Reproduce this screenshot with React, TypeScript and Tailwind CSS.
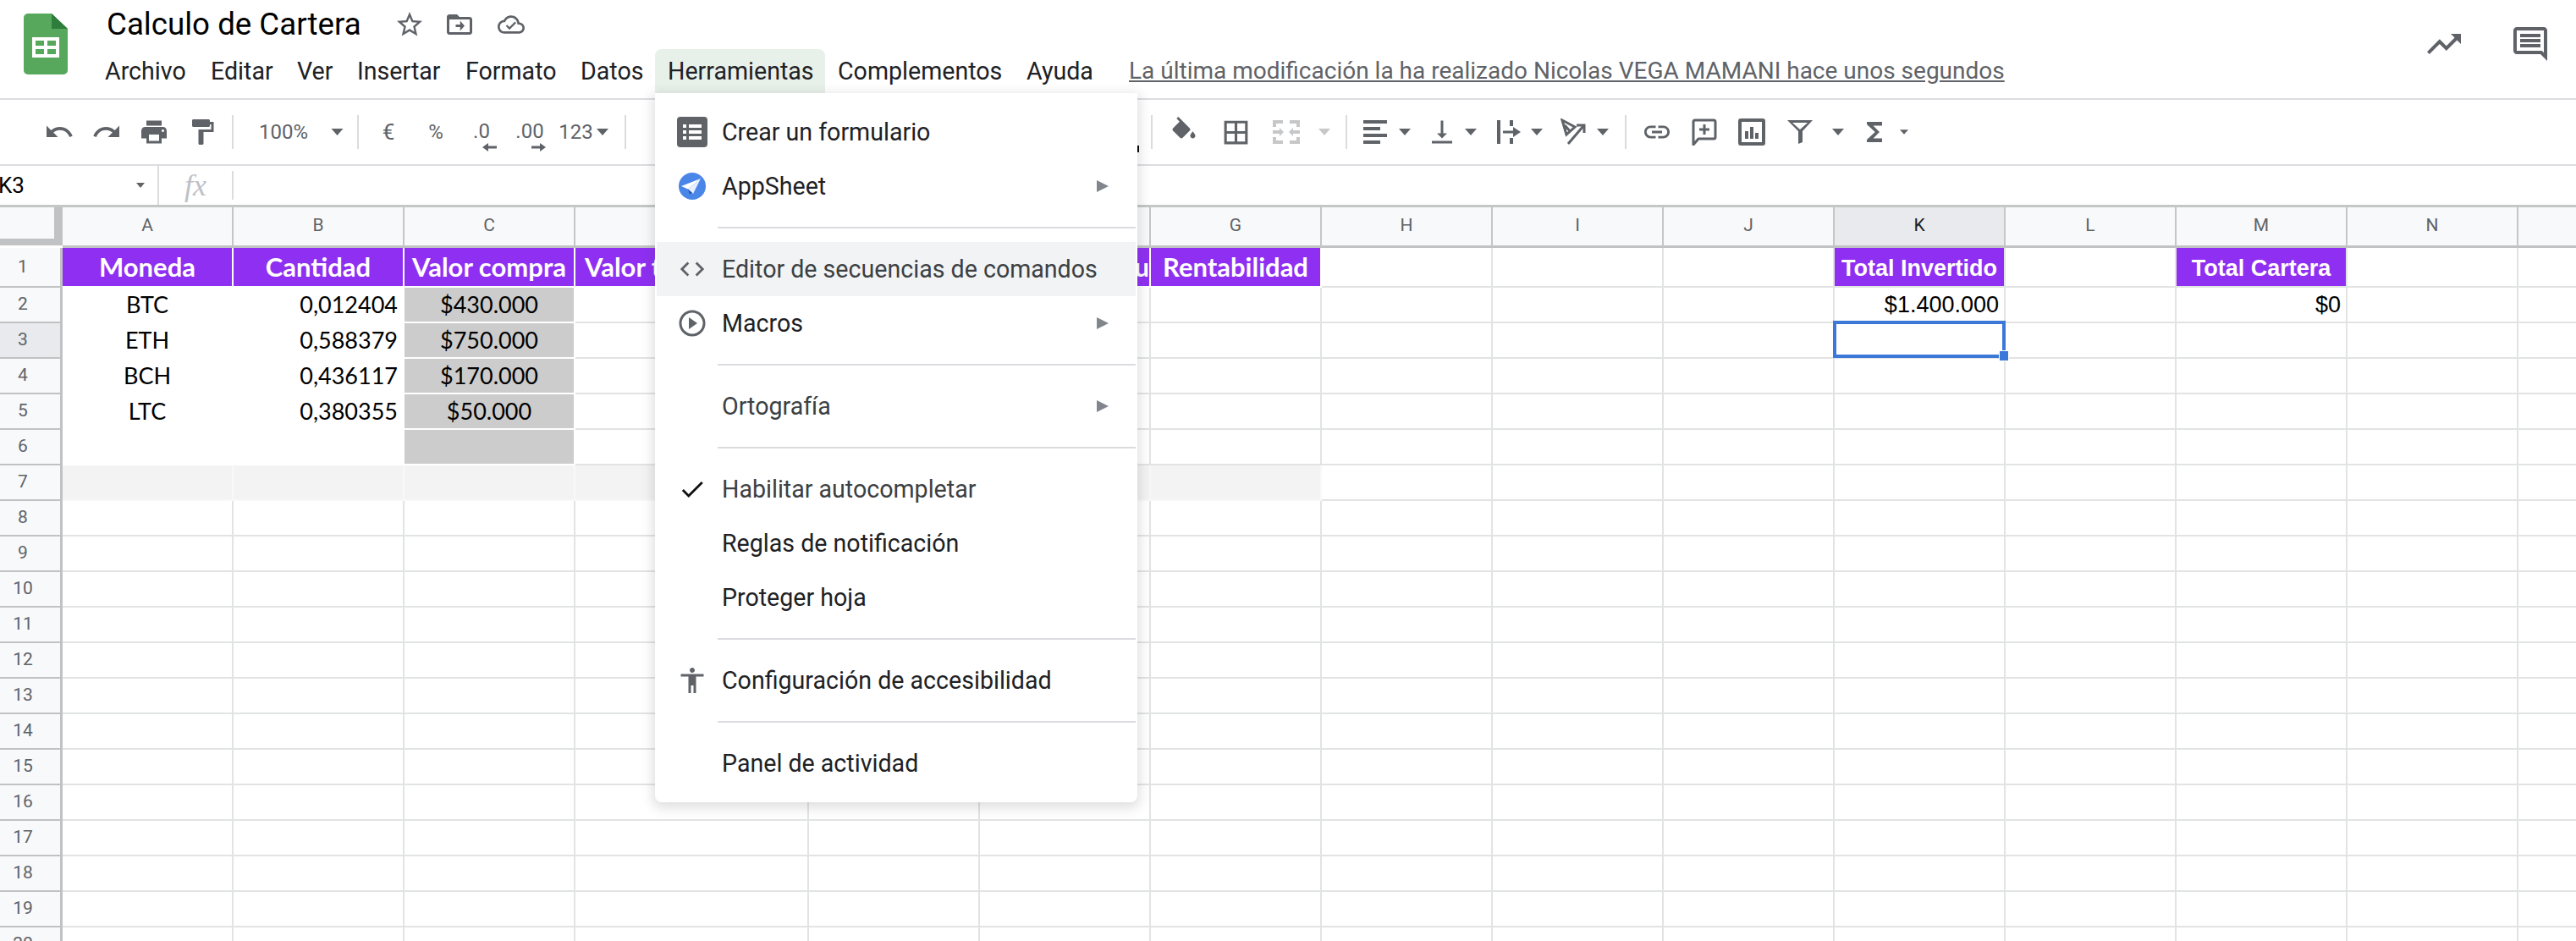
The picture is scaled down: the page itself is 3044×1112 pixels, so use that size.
import type { ReactNode } from 'react';

const gray = '#5f6368';

function Ico({ d, size = 36, color = gray, className = '' }: { d: string; size?: number; color?: string; className?: string }) {
  return (
    <svg width={size} height={size} viewBox="0 0 24 24" fill={color} className={`shrink-0 ${className}`}>
      <path d={d} />
    </svg>
  );
}

// icon slot, 30px wide, the svg may be a little wider than the slot
function Slot({ className = '', children }: { className?: string; children: ReactNode }) {
  return <div className={`w-[30px] h-[40px] shrink-0 flex items-center justify-center ${className}`}>{children}</div>;
}

function Caret({ className = '', w = 14, color = gray }: { className?: string; w?: number; color?: string }) {
  return (
    <div className={`w-[14px] shrink-0 flex items-center justify-center ${className}`}>
      <svg width={w} height={8} viewBox="0 0 14 8" fill={color} className="shrink-0">
        <path d="M0 0h14L7 8z" />
      </svg>
    </div>
  );
}

function Sep({ className = '' }: { className?: string }) {
  return <div className={`w-[2px] h-[40px] bg-[#dadce0] shrink-0 ${className}`} />;
}

const I = {
  undo: 'M12.5 8c-2.65 0-5.05.99-6.9 2.6L2 7v9h9l-3.62-3.62c1.39-1.16 3.16-1.88 5.12-1.88 3.54 0 6.55 2.31 7.6 5.5l2.37-.78C21.08 11.03 17.15 8 12.5 8z',
  redo: 'M18.4 10.6C16.55 8.99 14.15 8 11.5 8c-4.65 0-8.58 3.03-9.96 7.22L3.9 16c1.05-3.19 4.05-5.5 7.6-5.5 1.95 0 3.73.72 5.12 1.88L13 16h9V7l-3.6 3.6z',
  print: 'M19 8H5c-1.66 0-3 1.34-3 3v6h4v4h12v-4h4v-6c0-1.66-1.34-3-3-3zm-3 11H8v-5h8v5zm3-7c-.55 0-1-.45-1-1s.45-1 1-1 1 .45 1 1-.45 1-1 1zm-1-9H6v4h12V3z',
  paint: 'M18 4V3c0-.55-.45-1-1-1H5c-.55 0-1 .45-1 1v4c0 .55.45 1 1 1h12c.55 0 1-.45 1-1V6h1v4H9v11c0 .55.45 1 1 1h2c.55 0 1-.45 1-1v-9h8V4h-3z',
  fill: 'M16.56 8.94L7.62 0 6.21 1.41l2.38 2.38-5.15 5.15c-.59.59-.59 1.54 0 2.12l5.5 5.5c.29.29.68.44 1.06.44s.77-.15 1.06-.44l5.5-5.5c.59-.58.59-1.53 0-2.12zM19 11.5s-2 2.17-2 3.5c0 1.1.9 2 2 2s2-.9 2-2c0-1.33-2-3.5-2-3.5z',
  borders: 'M3 3v18h18V3H3zm8 16H5v-6h6v6zm0-8H5V5h6v6zm8 8h-6v-6h6v6zm0-8h-6V5h6v6z',
  valign: 'M16 13h-3V3h-2v10H8l4 4 4-4zM4 19v2h16v-2H4z',
  link: 'M3.9 12c0-1.71 1.39-3.1 3.1-3.1h4V7H7c-2.76 0-5 2.24-5 5s2.24 5 5 5h4v-1.9H7c-1.71 0-3.1-1.39-3.1-3.1zM8 13h8v-2H8v2zm9-6h-4v1.9h4c1.71 0 3.1 1.39 3.1 3.1s-1.39 3.1-3.1 3.1h-4V17h4c2.76 0 5-2.24 5-5s-2.24-5-5-5z',
  sigma: 'M18 4H6v2l6.5 6L6 18v2h12v-3h-7l5-5-5-5h7z',
  star: 'M22 9.24l-7.19-.62L12 2 9.19 8.63 2 9.24l5.46 4.73L5.82 21 12 17.27 18.18 21l-1.63-7.03L22 9.24zM12 15.4l-3.76 2.27 1-4.28-3.32-2.88 4.38-.38L12 6.1l1.71 4.04 4.38.38-3.32 2.88 1 4.28L12 15.4z',
  folder: 'M20 6h-8l-2-2H4c-1.1 0-2 .9-2 2v12c0 1.1.9 2 2 2h16c1.1 0 2-.9 2-2V8c0-1.1-.9-2-2-2zm0 12H4V8h16v10zM12.5 9l3.5 4-3.5 4v-3H9v-2h3.5z',
  cloud: 'M19.35 10.04C18.67 6.59 15.64 4 12 4 9.11 4 6.6 5.64 5.35 8.04 2.34 8.36 0 10.91 0 14c0 3.31 2.69 6 6 6h13c2.76 0 5-2.24 5-5 0-2.64-2.05-4.78-4.65-4.96zM19 18H6c-2.21 0-4-1.79-4-4 0-2.05 1.53-3.76 3.56-3.97l1.07-.11.5-.95C8.08 7.14 9.94 6 12 6c2.62 0 4.88 1.86 5.39 4.43l.3 1.5 1.53.11c1.56.1 2.78 1.41 2.78 2.96 0 1.65-1.35 3-3 3zM10.5 14.2l-2-2-1.2 1.2 3.2 3.2 6-6-1.2-1.2z',
  trend: 'M16 6l2.29 2.29-4.88 4.88-4-4L2 16.59 3.41 18l6-6 4 4 6.3-6.29L22 12V6z',
  comments: 'M20 2H4c-1.1 0-2 .9-2 2v12c0 1.1.9 2 2 2h14l4 4V4c0-1.1-.9-2-2-2zm0 15.17L18.83 16H4V4h16v13.17zM6 12h12v2H6zm0-3h12v2H6zm0-3h12v2H6z',
  code: 'M9.4 16.6L4.8 12l4.6-4.6L8 6l-6 6 6 6 1.4-1.4zm5.2 0l4.6-4.6-4.6-4.6L16 6l6 6-6 6-1.4-1.4z',
  check: 'M9 16.17L4.83 12l-1.42 1.41L9 19 21 7l-1.41-1.41z',
  access: 'M12 2c1.1 0 2 .9 2 2s-.9 2-2 2-2-.9-2-2 .9-2 2-2zm9 7h-6v13h-2v-6h-2v6H9V9H3V7h18v2z',
};

function SheetsLogo() {
  return (
    <svg width="52" height="72" viewBox="0 0 52 72" className="shrink-0">
      <path d="M5 0h28l19 18v49a5 5 0 0 1-5 5H5a5 5 0 0 1-5-5V5a5 5 0 0 1 5-5z" fill="#57a85c" />
      <path d="M33 0l19 18H33z" fill="#2e7d3c" />
      <path d="M10 28h32v24H10z" fill="#fff" />
      <path d="M14 32h10v6H14zM28 32h10v6H28zM14 42h10v6H14zM28 42h10v6H28z" fill="#57a85c" />
    </svg>
  );
}

function MergeIcon() {
  return (
    <svg width="32" height="28" viewBox="0 0 32 28" className="shrink-0" fill="#c6c7c9">
      <path d="M0 0h12v4H4v4H0zM20 0h12v8h-4V4h-8zM0 20h4v4h8v4H0zM28 20h4v8H20v-4h8z" />
      <path d="M0 12h8V9l5 5-5 5v-3H0zM32 12h-8V9l-5 5 5 5v-3h8z" />
    </svg>
  );
}

function HAlignIcon() {
  return (
    <svg width="28" height="28" viewBox="0 0 28 28" className="shrink-0" fill={gray}>
      <path d="M0 0h28v4H0zM0 8h20v4H0zM0 16h28v4H0zM0 24h20v4H0z" />
    </svg>
  );
}

function WrapIcon() {
  return (
    <svg width="28" height="28" viewBox="0 0 28 28" className="shrink-0" fill={gray}>
      <path d="M0 0h4v28H0zM15 0h4v7h-4zM15 21h4v7h-4zM7 12.5h12V8l9 6-9 6v-4.500H7z" />
    </svg>
  );
}

function RotateIcon() {
  return (
    <svg width="32" height="32" viewBox="0 0 32 32" className="shrink-0" fill="none" stroke={gray} strokeWidth="3">
      <path d="M3 2l15 8-10 9zM6 8l7 8" />
      <path d="M10 30L28 9" />
      <path d="M20 8h9v9" />
    </svg>
  );
}

function CommentAddIcon() {
  return (
    <svg width="30" height="32" viewBox="0 0 30 32" className="shrink-0" fill="none" stroke={gray} strokeWidth="3">
      <path d="M2 31V4a2 2 0 0 1 2-2h22a2 2 0 0 1 2 2v18a2 2 0 0 1-2 2H8z" strokeLinejoin="round" />
      <path d="M15 7v12M9 13h12" />
    </svg>
  );
}

function ChartIcon() {
  return (
    <svg width="32" height="32" viewBox="0 0 32 32" className="shrink-0" fill={gray}>
      <path d="M3 0h26a3 3 0 0 1 3 3v26a3 3 0 0 1-3 3H3a3 3 0 0 1-3-3V3a3 3 0 0 1 3-3zm1 4v24h24V4z" fillRule="evenodd" />
      <path d="M8 15h4v9H8zM14 10h4v14h-4zM20 17h4v7h-4z" />
    </svg>
  );
}

function FilterIcon() {
  return (
    <svg width="30" height="28" viewBox="0 0 30 28" className="shrink-0" fill={gray}>
      <path d="M0 0h30L18 13v13l-5 2V13zM6 3l9 8 9-8z" fillRule="evenodd" />
    </svg>
  );
}

function DecIcon({ label, right }: { label: string; right?: boolean }) {
  return (
    <div className="flex flex-col h-[44px] justify-start text-[24px] leading-[30px] text-[#5f6368] shrink-0 items-stretch w-full">
      <span className="text-center">{label}</span>
      <svg width="17" height="10" viewBox="0 0 17 10" fill={gray} className="self-end -mt-[1px]">
        {right ? <path d="M0 3.500h10V0l7 5-7 5V6.500H0z" /> : <path d="M17 3.500H7V0L0 5l7 5V6.500h10z" />}
      </svg>
    </div>
  );
}

function Toolbar() {
  return (
    <div className="h-[78px] border-b-2 border-[#dadce0] flex items-center pl-[55px] text-[#5f6368]">
      <Slot><Ico d={I.undo} /></Slot>
      <Slot className="ml-[26px]"><Ico d={I.redo} /></Slot>
      <Slot className="ml-[26px]"><Ico d={I.print} /></Slot>
      <Slot className="ml-[27px]"><Ico d={I.paint} /></Slot>
      <Sep className="ml-[20px]" />
      <span className="ml-[29px] w-[60px] text-center text-[24px] shrink-0">100%</span>
      <Caret className="ml-[26px]" w={15} />
      <Sep className="ml-[17px]" />
      <Slot className="ml-[20px] text-[26px]">€</Slot>
      <Slot className="ml-[26px] text-[24px]">%</Slot>
      <div className="ml-[21px] w-[36px] mt-[12px] shrink-0"><DecIcon label=".0" /></div>
      <div className="ml-[20px] w-[38px] mt-[12px] shrink-0"><DecIcon label=".00" right /></div>
      <span className="ml-[15px] w-[41px] text-center text-[24px] shrink-0">123</span>
      <Caret className="ml-[4px]" />
      <Sep className="ml-[19px]" />
      <div className="ml-[603px] w-[3px] h-[8px] bg-black self-start mt-[54px] shrink-0" />
      <Sep className="ml-[14px]" />
      <Slot className="ml-[22px]"><Ico d={I.fill} /></Slot>
      <Slot className="ml-[31px]"><Ico d={I.borders} size={37} /></Slot>
      <Slot className="ml-[30px]"><MergeIcon /></Slot>
      <Caret className="ml-[23px]" color="#c6c7c9" />
      <Sep className="ml-[18px]" />
      <Slot className="ml-[18px]"><HAlignIcon /></Slot>
      <Caret className="ml-[13px]" />
      <Slot className="ml-[22px]"><Ico d={I.valign} /></Slot>
      <Caret className="ml-[12px]" />
      <Slot className="ml-[23px]"><WrapIcon /></Slot>
      <Caret className="ml-[11px]" />
      <Slot className="ml-[21px]"><RotateIcon /></Slot>
      <Caret className="ml-[13px]" />
      <Sep className="ml-[19px]" />
      <Slot className="ml-[21px]"><Ico d={I.link} /></Slot>
      <Slot className="ml-[26px]"><CommentAddIcon /></Slot>
      <Slot className="ml-[26px]"><ChartIcon /></Slot>
      <Slot className="ml-[27px]"><FilterIcon /></Slot>
      <Caret className="ml-[23px]" />
      <Slot className="ml-[21px]"><Ico d={I.sigma} /></Slot>
      <Caret className="ml-[13px]" w={10} />
    </div>
  );
}

function TitleBar() {
  const menus = [
    { label: 'Archivo', w: 'w-[125px]' },
    { label: 'Editar', w: 'w-[102px]' },
    { label: 'Ver', w: 'w-[71px]' },
    { label: 'Insertar', w: 'w-[128px]' },
    { label: 'Formato', w: 'w-[136px]' },
    { label: 'Datos', w: 'w-[103px]' },
    { label: 'Herramientas', w: 'w-[201px] bg-[#e8f0ea] rounded-t-[8px]' },
    { label: 'Complementos', w: 'w-[223px]' },
    { label: 'Ayuda', w: 'w-[136px]' },
  ];
  return (
    <header className="h-[118px] border-b-2 border-[#dadce0] flex">
      <div className="pl-[28px] pt-[16px]"><SheetsLogo /></div>
      <div className="ml-[29px]">
        <div className="h-[58px] pl-[17px] flex items-center">
          <span className="w-[301px] text-[36.7px] text-black whitespace-nowrap [font-family:Roboto,sans-serif]">Calculo de Cartera</span>
          <Ico d={I.star} className="ml-[39px]" />
          <Ico d={I.folder} className="ml-[23px]" />
          <Ico d={I.cloud} size={32} className="ml-[27px]" />
        </div>
        <div className="h-[52px] flex items-center text-[28.6px] text-[#202124]">
          {menus.map((m) => (
            <div key={m.label} className={`h-[52px] pl-[15px] flex items-center shrink-0 ${m.w}`}>{m.label}</div>
          ))}
          <span className="text-[28px] text-[#5f6368] underline whitespace-nowrap">
            La última modificación la ha realizado Nicolas VEGA MAMANI hace unos segundos
          </span>
        </div>
      </div>
      <div className="ml-auto flex gap-[54px] pr-[30px] pt-[28px]">
        <Ico d={I.trend} size={48} />
        <Ico d={I.comments} size={48} />
      </div>
    </header>
  );
}

function FormulaBar() {
  return (
    <div className="h-[49px] border-b-[3px] border-[#c4c7c5] flex items-stretch">
      <div className="w-[188px] border-r-2 border-[#dadce0] flex items-center shrink-0">
        <span className="-ml-[2px] text-[26px] text-black">K3</span>
        <svg width="10" height="6" viewBox="0 0 10 6" fill={gray} className="ml-auto mr-[15px]">
          <path d="M0 0h10L5 6z" />
        </svg>
      </div>
      <div className="w-[88px] flex items-center justify-center border-r-2 border-[#dadce0] my-[6px] shrink-0">
        <span className="text-[36px] italic text-[#bdc1c6] [font-family:'Liberation_Serif',serif]">fx</span>
      </div>
    </div>
  );
}

const letters = ['A', 'B', 'C', 'D', 'E', 'F', 'G', 'H', 'I', 'J', 'K', 'L', 'M', 'N', 'O'];
const rowNums = Array.from({ length: 20 }, (_, i) => i + 1);

const muli = '[font-family:Lato,sans-serif]';
const arial = "[font-family:'Liberation_Sans',Arial,sans-serif]";
const headCell = `bg-[#8f2ff2] text-white font-bold text-[31px] ${muli} border-white`;
const grayCell = `bg-[#cccccc] text-black text-[27px] justify-center ${muli} border-white`;
const dataCell = `text-black text-[27px] ${muli}`;
const totalCell = `bg-[#8f2ff2] border-[#8f2ff2] text-white font-bold text-[27px] justify-center pt-[4px] ${arial}`;

type CellDef = { text?: string; className: string };

const cells: Record<string, CellDef> = {
  A1: { text: 'Moneda', className: `${headCell} justify-center` },
  B1: { text: 'Cantidad', className: `${headCell} justify-center` },
  C1: { text: 'Valor compra', className: `${headCell} justify-center` },
  D1: { text: 'Valor total', className: `${headCell} pl-[11px]` },
  E1: { className: headCell },
  F1: { text: 'u', className: `${headCell} justify-end` },
  G1: { text: 'Rentabilidad', className: `${headCell} justify-center` },
  K1: { text: 'Total Invertido', className: totalCell },
  M1: { text: 'Total Cartera', className: totalCell },
  A2: { text: 'BTC', className: `${dataCell} justify-center border-[#ffffff]` },
  A3: { text: 'ETH', className: `${dataCell} justify-center border-[#ffffff]` },
  A4: { text: 'BCH', className: `${dataCell} justify-center border-[#ffffff]` },
  A5: { text: 'LTC', className: `${dataCell} justify-center border-[#ffffff]` },
  A6: { className: 'border-[#ffffff]' },
  B2: { text: '0,012404', className: `${dataCell} justify-end pr-[6px] border-[#ffffff]` },
  B3: { text: '0,588379', className: `${dataCell} justify-end pr-[6px] border-[#ffffff]` },
  B4: { text: '0,436117', className: `${dataCell} justify-end pr-[6px] border-[#ffffff]` },
  B5: { text: '0,380355', className: `${dataCell} justify-end pr-[6px] border-[#ffffff]` },
  B6: { className: 'border-[#ffffff]' },
  C2: { text: '$430.000', className: grayCell },
  C3: { text: '$750.000', className: grayCell },
  C4: { text: '$170.000', className: grayCell },
  C5: { text: '$50.000', className: grayCell },
  C6: { className: grayCell },
  K2: { text: '$1.400.000', className: `text-black text-[27px] justify-end pr-[6px] ${arial}` },
  M2: { text: '$0', className: `text-black text-[27px] justify-end pr-[6px] ${arial}` },
};

function Grid() {
  return (
    <div className="relative grid grid-cols-[74px_repeat(3,202px)_276px_repeat(11,202px)] grid-rows-[48px_47px_repeat(19,42px)]">
      <div className="bg-[#f8f9fa] border-r-[10px] border-[#c0c2c4] h-[45px]">
        <div className="h-[37px]" />
        <div className="h-[8px] bg-[#c0c2c4]" />
      </div>
      {letters.map((l) => (
        <div
          key={l}
          className={`${l === 'K' ? 'bg-[#e8eaed] text-[#202124]' : 'bg-[#f8f9fa] text-[#5f6368]'} border-r-2 border-[#c4c7c5] border-b-[3px] border-b-[#c0c2c4] flex items-center justify-center text-[21px] pb-[2px]`}
        >
          {/* column O is off screen, its letter would never show */}
          {l === 'O' ? null : l}
        </div>
      ))}
      {rowNums.map((r) => (
        <div key={r} className="contents">
          <div
            className={`${r === 3 ? 'bg-[#e8eaed]' : 'bg-[#f8f9fa]'} border-r-[3px] border-b-2 border-[#c0c2c4] flex items-center justify-center pr-[17px] text-[21px] text-[#5f6368]`}
          >
            {r}
          </div>
          {letters.map((l, i) => {
            const cell = cells[`${l}${r}`];
            const isRow7 = r === 7 && i < 7;
            return (
              <div
                key={l}
                className={`relative flex items-center border-r-2 border-b-2 whitespace-nowrap min-w-0 ${
                  isRow7 ? 'bg-[#f3f3f3] border-[#f8f8f8]' : 'border-[#e2e3e3]'
                } ${cell ? cell.className : ''}`}
              >
                {cell?.text}
                {l === 'K' && r === 3 && (
                  <div className="absolute -left-[2px] -top-[3px] w-[204px] h-[44px] border-[4px] border-[#3b78d8] z-10">
                    <div className="absolute -right-[8px] -bottom-[8px] w-[12px] h-[13px] bg-[#3b78d8] border border-white" />
                  </div>
                )}
              </div>
            );
          })}
        </div>
      ))}
    </div>
  );
}

type MenuEntry =
  | { sep: true }
  | { sep?: false; label: string; icon?: ReactNode; more?: boolean; hover?: boolean; soft?: boolean };

function FormIcon() {
  return (
    <svg width="36" height="36" viewBox="0 0 36 36">
      <rect width="36" height="36" rx="4" fill={gray} />
      <path d="M7 9h4v4H7zM14 9h15v4H14zM7 16h4v4H7zM14 16h15v4H14zM7 23h4v4H7zM14 23h15v4H14z" fill="#fff" />
    </svg>
  );
}

function AppSheetIcon() {
  return (
    <svg width="32" height="32" viewBox="0 0 32 32">
      <circle cx="16" cy="16" r="16" fill="#4a86e8" />
      <path d="M26 7L3 16l8 3.500z" fill="#fff" />
      <path d="M26 7L11 19.500 17 25z" fill="#e8f0fe" />
      <path d="M11 19.500l2 6 3-1.500z" fill="#1f4fb0" />
    </svg>
  );
}

function MacroIcon() {
  return (
    <svg width="32" height="32" viewBox="0 0 32 32" fill="none">
      <circle cx="16" cy="16" r="14" stroke={gray} strokeWidth="3" />
      <path d="M12 9l10 7-10 7z" fill={gray} />
    </svg>
  );
}

const menu: MenuEntry[] = [
  { label: 'Crear un formulario', icon: <FormIcon /> },
  { label: 'AppSheet', icon: <AppSheetIcon />, more: true },
  { sep: true },
  { label: 'Editor de secuencias de comandos', icon: <Ico d={I.code} size={34} />, hover: true, soft: true },
  { label: 'Macros', icon: <MacroIcon />, more: true },
  { sep: true },
  { label: 'Ortografía', more: true, soft: true },
  { sep: true },
  { label: 'Habilitar autocompletar', icon: <Ico d={I.check} size={34} color="#111" />, soft: true },
  { label: 'Reglas de notificación' },
  { label: 'Proteger hoja' },
  { sep: true },
  { label: 'Configuración de accesibilidad', icon: <Ico d={I.access} size={36} /> },
  { sep: true },
  { label: 'Panel de actividad' },
];

function ToolsMenu() {
  return (
    <div className="absolute left-[774px] top-[110px] w-[570px] h-[838px] bg-white rounded-b-[8px] px-[2px] py-[14px] z-20 shadow-[0_4px_14px_3px_rgba(60,64,67,0.16)]">
      {menu.map((m, i) =>
        m.sep ? (
          <div key={i} className="h-[2px] bg-[#dadce0] my-[16px] ml-[72px]" />
        ) : (
          <div
            key={i}
            className={`h-[64px] flex items-center text-[28.6px] ${m.soft ? 'text-[#3c4043]' : 'text-[#202124]'} ${m.hover ? 'bg-[#f1f3f4]' : ''}`}
          >
            <div className="w-[70px] ml-[7px] flex items-center justify-center shrink-0">{m.icon}</div>
            <span>{m.label}</span>
            {m.more && (
              <svg width="14" height="14" viewBox="0 0 14 14" fill="#80868b" className="ml-auto mr-[32px]">
                <path d="M0 0l14 7-14 7z" />
              </svg>
            )}
          </div>
        ),
      )}
    </div>
  );
}

export default function App() {
  return (
    <div className="relative w-[3044px] h-[1112px] overflow-hidden bg-white [font-family:Roboto,sans-serif]">
      <TitleBar />
      <Toolbar />
      <FormulaBar />
      <Grid />
      <ToolsMenu />
    </div>
  );
}
